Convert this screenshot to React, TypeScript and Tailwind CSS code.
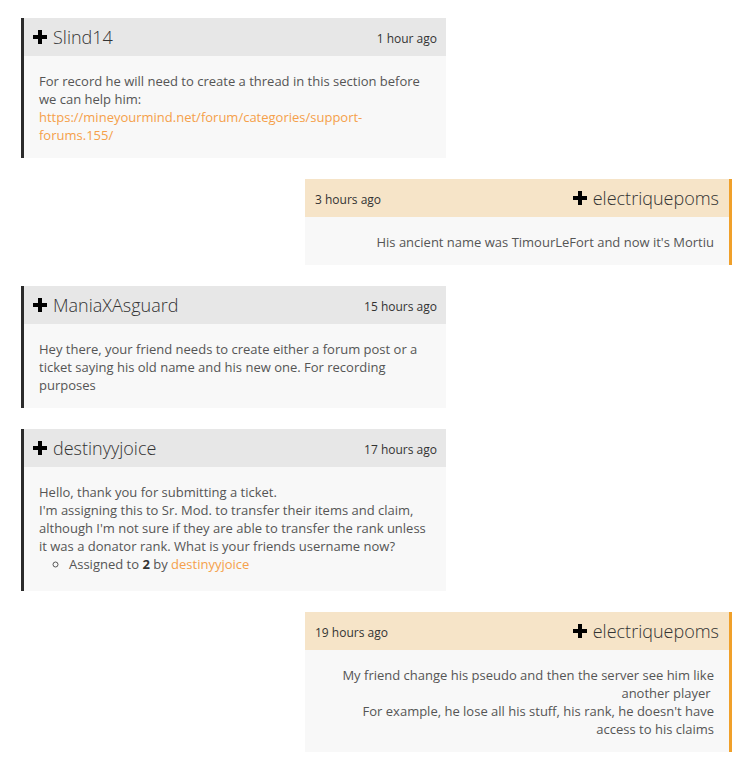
const font = { fontFamily: '"Open Sans", "Noto Sans", sans-serif' };

function Plus() {
  return (
    <svg width="14" height="14" viewBox="0 0 14 14" className="shrink-0">
      <path d="M5 0h4v5h5v4H9v5H5V9H0V5h5z" fill="#000" />
    </svg>
  );
}

type Post = {
  name: string;
  time: string;
  staff: boolean;
  body: React.ReactNode;
};

const posts: Post[] = [
  {
    name: "Slind14",
    time: "1 hour ago",
    staff: true,
    body: (
      <>
        For record he will need to create a thread in this section before we can help him:{" "}
        <a className="text-[#f5a04a]">https://mineyourmind.net/forum/categories/support-forums.155/</a>
      </>
    ),
  },
  {
    name: "electriquepoms",
    time: "3 hours ago",
    staff: false,
    body: <>His ancient name was TimourLeFort and now it's Mortiu</>,
  },
  {
    name: "ManiaXAsguard",
    time: "15 hours ago",
    staff: true,
    body: (
      <>
        Hey there, your friend needs to create either a forum post or a ticket saying his old name and
        his new one. For recording purposes
      </>
    ),
  },
  {
    name: "destinyyjoice",
    time: "17 hours ago",
    staff: true,
    body: (
      <>
        Hello, thank you for submitting a ticket.
        <br />
        I'm assigning this to Sr. Mod. to transfer their items and claim, although I'm not sure if they
        are able to transfer the rank unless it was a donator rank. What is your friends username now?
        <ul className="mb-[4px] list-[circle] pl-[30px]">
          <li>
            Assigned to <b className="font-bold text-[#333]">2</b> by{" "}
            <a className="text-[#f5a04a]">destinyyjoice</a>
          </li>
        </ul>
      </>
    ),
  },
  {
    name: "electriquepoms",
    time: "19 hours ago",
    staff: false,
    body: (
      <>
        My friend change his pseudo and then the server see him like another player&nbsp;
        <br />
        For example, he lose all his stuff, his rank, he doesn't have access to his claims
      </>
    ),
  },
];

function Card({ post }: { post: Post }) {
  if (post.staff) {
    return (
      <div className="ml-[21px] w-[425px] border-l-[3px] border-[#2b2b2b]">
        <div className="flex h-[38px] items-center justify-between bg-[#e7e7e7] pl-[9px] pr-[9px]">
          <div className="flex items-center gap-[6px]">
            <Plus />
            <span className="text-[18px] font-light text-[#333]">{post.name}</span>
          </div>
          <span className="mt-[3px] text-[12px] text-[#333]">{post.time}</span>
        </div>
        <div className="bg-[#f8f8f8] px-[15px] pt-[16px] pb-[14px] text-[13px] leading-[18px] text-[#555]">
          {post.body}
        </div>
      </div>
    );
  }
  return (
    <div className="ml-[305px] w-[427px] border-r-[3px] border-[#f0a02a]">
      <div className="flex h-[38px] items-center justify-between bg-[#f6e4c8] pl-[10px] pr-[10px]">
        <span className="mt-[3px] text-[12px] text-[#333]">{post.time}</span>
        <div className="flex items-center gap-[6px]">
          <Plus />
          <span className="text-[18px] font-light text-[#333]">{post.name}</span>
        </div>
      </div>
      <div className="bg-[#f8f8f8] px-[15px] pt-[16px] pb-[14px] text-right text-[13px] leading-[18px] text-[#555]">
        {post.body}
      </div>
    </div>
  );
}

export default function App() {
  return (
    <div className="flex flex-col gap-[21px] bg-white pt-[18px] pb-[24px]" style={font}>
      {posts.map((p, i) => (
        <Card key={i} post={p} />
      ))}
    </div>
  );
}
